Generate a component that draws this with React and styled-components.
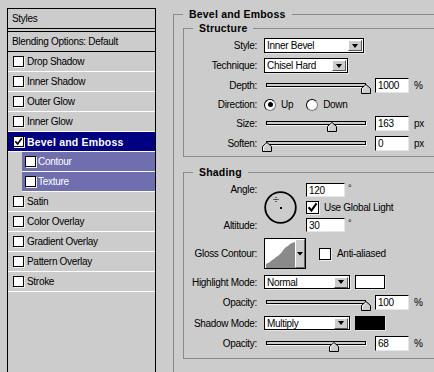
import React from "react";
import styled, { createGlobalStyle } from "styled-components";

const GlobalStyle = createGlobalStyle`
  html, body {
    margin: 0;
    padding: 0;
    background: #cccccc;
    overflow: hidden;
  }
  body {
    font-family: "Liberation Sans", Arial, sans-serif;
    font-size: 10px;
    letter-spacing: -0.3px;
    color: #000;
  }
`;

const Window = styled.div`
  display: flex;
  align-items: flex-start;
  gap: 17px;
  width: 480px;
  height: 372px;
  padding: 8px 0 0 7px;
  box-sizing: border-box;
  overflow: hidden;
`;

/* ---------- left list ---------- */

const Panel = styled.div`
  flex: none;
  width: 149px;
  height: 400px;
  box-sizing: border-box;
  border: 1px solid #000;
`;

const PanelTitle = styled.div`
  height: 19px;
  display: flex;
  align-items: center;
  padding-left: 4px;
  border-bottom: 4px double #000;
`;

const PanelHead = styled.div`
  height: 19px;
  display: flex;
  align-items: center;
  padding-left: 4px;
  border-bottom: 1px solid #000;
`;

const Item = styled.div`
  height: 19px;
  display: flex;
  align-items: center;
  gap: ${({ $sub }) => ($sub ? "2px" : "3px")};
  padding-left: ${({ $sub }) => ($sub ? "3px" : "5px")};
  margin-left: ${({ $sub }) => ($sub ? "14px" : "0")};
  border-bottom: 1px solid #fff;
  background: ${({ $selected, $sub }) =>
    $selected ? "#000080" : $sub ? "#6f6faf" : "transparent"};
  color: ${({ $selected, $sub }) => ($selected || $sub ? "#fff" : "#000")};
  font-weight: ${({ $selected }) => ($selected ? "bold" : "normal")};
  font-size: ${({ $selected }) => ($selected ? "10.5px" : "10px")};
  letter-spacing: ${({ $selected }) => ($selected ? "0.2px" : "-0.3px")};
`;

const Box = styled.span`
  flex: none;
  display: grid;
  place-items: center;
  width: ${({ $size }) => $size}px;
  height: ${({ $size }) => $size}px;
  box-sizing: border-box;
  border: 1px solid #000;
  background: #fff;
  box-shadow: 1px 1px 0 #eeeeee;
`;

const Check = ({ checked, size = 11 }) => (
  <Box $size={size}>
    {checked && (
      <svg width={size - 2} height={size - 2} viewBox="0 0 9 9">
        <path d="M1.3 4.3 L3.6 7 L7.8 1.2" fill="none" stroke="#000" strokeWidth="1.7" />
      </svg>
    )}
  </Box>
);

/* ---------- right form ---------- */

const Group = styled.fieldset`
  margin: ${({ $gap }) => ($gap ? `${$gap}px 0 0` : "0")};
  padding: ${({ $pad }) => $pad};
  border: 1px solid #8a8a8a;
  min-width: 0;
  box-sizing: border-box;
  width: ${({ $w }) => ($w ? `${$w}px` : "auto")};
  display: flex;
  flex-direction: column;
  gap: ${({ $rowGap }) => $rowGap || 0}px;
`;

const Legend = styled.legend`
  padding: 0 6px;
  font-weight: bold;
  font-size: 10.5px;
  line-height: 12px;
  letter-spacing: 0.2px;
`;

const Row = styled.div`
  display: flex;
  align-items: center;
  gap: 7px;
  height: ${({ $h }) => $h || 15}px;
`;

const Label = styled.span`
  flex: none;
  width: 64px;
  display: flex;
  justify-content: flex-end;
  white-space: nowrap;
  line-height: 13px;
`;

const Field = styled.input`
  flex: none;
  width: ${({ $w }) => $w || 34}px;
  height: ${({ $h }) => $h || 15}px;
  box-sizing: border-box;
  margin: 0;
  padding: 0 0 0 2px;
  border: 1px solid #000;
  border-right-color: #e6e6e6;
  border-bottom-color: #e6e6e6;
  background: #fff;
  font: inherit;
  letter-spacing: inherit;
  color: #000;
  outline: none;
`;

const Unit = styled.span`
  margin-left: -2px;
  align-self: ${({ $top }) => ($top ? "flex-start" : "center")};
  font-size: ${({ $top }) => ($top ? "9px" : "10px")};
`;

const SelectBox = styled.div`
  flex: none;
  display: flex;
  align-items: center;
  width: ${({ $w }) => $w}px;
  height: ${({ $h }) => $h || 15}px;
  box-sizing: border-box;
  border: 1px solid #000;
  background: #fff;
  box-shadow: 1px 1px 0 #e6e6e6;
`;

const SelectText = styled.span`
  flex: 1;
  padding-left: 2px;
`;

const ArrowButton = styled.span`
  flex: none;
  display: grid;
  place-items: center;
  width: 14px;
  height: 11px;
  margin-right: 1px;
  box-sizing: border-box;
  background: #cccccc;
  border: 1px solid;
  border-color: #fff #555 #555 #fff;
  &::after {
    content: "";
    border-left: 3px solid transparent;
    border-right: 3px solid transparent;
    border-top: 4px solid #000;
  }
`;

const Select = ({ value, width, height }) => (
  <SelectBox $w={width} $h={height}>
    <SelectText>{value}</SelectText>
    <ArrowButton />
  </SelectBox>
);

const Swatch = styled.span`
  flex: none;
  margin-left: -2px;
  width: 30px;
  height: 14px;
  box-sizing: border-box;
  border: 1px solid #000;
  background: ${({ $color }) => $color};
  box-shadow: 1px 1px 0 #e6e6e6;
`;

const SliderBox = styled.div`
  position: relative;
  flex: none;
  width: 104px;
  height: 15px;
`;

const Track = styled.div`
  margin: 5px 2px 0;
  height: 4px;
  box-sizing: border-box;
  border: 1px solid #000;
  background: #cccccc;
  box-shadow: 1px 1px 0 #f2f2f2;
`;

const Thumb = styled.svg`
  position: absolute;
  top: 6px;
`;

const Slider = ({ pct }) => (
  <SliderBox>
    <Track />
    <Thumb width="10" height="10" viewBox="0 0 10 10" style={{ left: 3 + pct * 99 - 5 }}>
      <path d="M5 0.5 L9.5 4.5 L9.5 9.5 L0.5 9.5 L0.5 4.5 Z" fill="#cccccc" stroke="#000" />
      <path d="M1.5 8.5 L1.5 5 L5 1.8" fill="none" stroke="#fff" />
    </Thumb>
  </SliderBox>
);

const SliderRow = ({ label, pct, value, unit }) => (
  <Row>
    <Label>{label}</Label>
    <Slider pct={pct} />
    <Field readOnly value={value} />
    <Unit>{unit}</Unit>
  </Row>
);

const RadioGroup = styled.div`
  display: flex;
  align-items: center;
  gap: 13px;
`;

const RadioOption = styled.span`
  display: flex;
  align-items: center;
  gap: 5px;
`;

const RadioDot = styled.span`
  flex: none;
  display: grid;
  place-items: center;
  width: 12px;
  height: 12px;
  box-sizing: border-box;
  border-radius: 50%;
  border: 1px solid #000;
  border-right-color: #777;
  border-bottom-color: #777;
  background: #fff;
  &::after {
    content: "";
    width: 5px;
    height: 5px;
    border-radius: 50%;
    background: ${({ $on }) => ($on ? "#000" : "transparent")};
  }
`;

const AngleBlock = styled.div`
  display: flex;
  align-items: center;
  gap: 7px;
  height: 49px;
`;

const LabelColumn = styled.div`
  flex: none;
  align-self: stretch;
  width: 64px;
  display: flex;
  flex-direction: column;
  justify-content: space-between;
  align-items: flex-end;
  line-height: 13px;
`;

const FieldColumn = styled.div`
  align-self: stretch;
  display: flex;
  flex-direction: column;
  justify-content: space-between;
`;

const Inline = styled.div`
  display: flex;
  align-items: center;
  gap: ${({ $gap }) => $gap}px;
  margin-left: ${({ $ml }) => $ml || 0}px;
  white-space: nowrap;
`;

const Dial = () => (
  <svg width="35" height="36" viewBox="0 0 35 36">
    <circle cx="16.5" cy="17.5" r="15.3" fill="none" stroke="#000" strokeWidth="1.8" />
    <rect x="16" y="17" width="2" height="2" fill="#000" />
    <path d="M9.5 9.5 H14.5 M12 7 V12" stroke="#000" strokeWidth="1" strokeDasharray="1 1" />
  </svg>
);

const ContourPicker = () => (
  <svg width="42" height="31" viewBox="0 0 42 31">
    <rect x="0.5" y="0.5" width="41" height="30" fill="#fff" stroke="#000" />
    <path
      d="M2 30 L2 26 L4 25 L6 24 L8 22 L10 21 L12 19 L14 18 L16 16 L18 14 L20 11 L22 9 L24 8 L26 6 L28 5 L31 4 L31 30 Z"
      fill="#8a8a8a"
    />
    <rect x="31" y="1" width="10" height="29" fill="#cccccc" />
    <path d="M31.5 29.5 V1.5 H40.5" fill="none" stroke="#fff" />
    <path d="M40.5 1.5 V29.5 H31.5" fill="none" stroke="#666" />
    <path d="M33 14 H39 L36 17.5 Z" fill="#000" />
  </svg>
);

const items = [
  { name: "Drop Shadow" },
  { name: "Inner Shadow" },
  { name: "Outer Glow" },
  { name: "Inner Glow" },
  { name: "Bevel and Emboss", selected: true, checked: true },
  { name: "Contour", sub: true },
  { name: "Texture", sub: true },
  { name: "Satin" },
  { name: "Color Overlay" },
  { name: "Gradient Overlay" },
  { name: "Pattern Overlay" },
  { name: "Stroke" },
];

export default function App() {
  return (
    <>
      <GlobalStyle />
      <Window>
        <Panel>
          <PanelTitle>Styles</PanelTitle>
          <PanelHead>Blending Options: Default</PanelHead>
          {items.map((it) => (
            <Item key={it.name} $selected={it.selected} $sub={it.sub}>
              <Check checked={it.checked} />
              {it.name}
            </Item>
          ))}
        </Panel>

        <Group $w={290} $pad="2px 0 40px 9px">
          <Legend>Bevel and Emboss</Legend>

          <Group $pad="4px 0 5px 9px" $rowGap={5}>
            <Legend>Structure</Legend>
            <Row>
              <Label>Style:</Label>
              <Select value="Inner Bevel" width={100} />
            </Row>
            <Row>
              <Label>Technique:</Label>
              <Select value="Chisel Hard" width={84} />
            </Row>
            <SliderRow label="Depth:" pct={1} value="1000" unit="%" />
            <Row $h={13}>
              <Label>Direction:</Label>
              <RadioGroup>
                <RadioOption>
                  <RadioDot $on />
                  Up
                </RadioOption>
                <RadioOption>
                  <RadioDot />
                  Down
                </RadioOption>
              </RadioGroup>
            </Row>
            <SliderRow label="Size:" pct={0.66} value="163" unit="px" />
            <SliderRow label="Soften:" pct={0} value="0" unit="px" />
          </Group>

          <Group $gap={9} $pad="5px 0 7px 9px" $rowGap={6}>
            <Legend>Shading</Legend>
            <AngleBlock>
              <LabelColumn>
                <span>Angle:</span>
                <span>Altitude:</span>
              </LabelColumn>
              <Dial />
              <FieldColumn>
                <Inline $gap={5}>
                  <Field readOnly value="120" $w={39} $h={14} />
                  <Unit $top>°</Unit>
                </Inline>
                <Inline $gap={5}>
                  <Check checked size={13} />
                  Use Global Light
                </Inline>
                <Inline $gap={5}>
                  <Field readOnly value="30" $w={39} $h={14} />
                  <Unit $top>°</Unit>
                </Inline>
              </FieldColumn>
            </AngleBlock>
            <Row $h={31}>
              <Label>Gloss Contour:</Label>
              <ContourPicker />
              <Inline $gap={6} $ml={6}>
                <Check size={12} />
                Anti-aliased
              </Inline>
            </Row>
            <Row $h={14}>
              <Label>Highlight Mode:</Label>
              <Select value="Normal" width={86} height={14} />
              <Swatch $color="#fff" />
            </Row>
            <SliderRow label="Opacity:" pct={1} value="100" unit="%" />
            <Row $h={14}>
              <Label>Shadow Mode:</Label>
              <Select value="Multiply" width={86} height={14} />
              <Swatch $color="#000" />
            </Row>
            <SliderRow label="Opacity:" pct={0.68} value="68" unit="%" />
          </Group>
        </Group>
      </Window>
    </>
  );
}
